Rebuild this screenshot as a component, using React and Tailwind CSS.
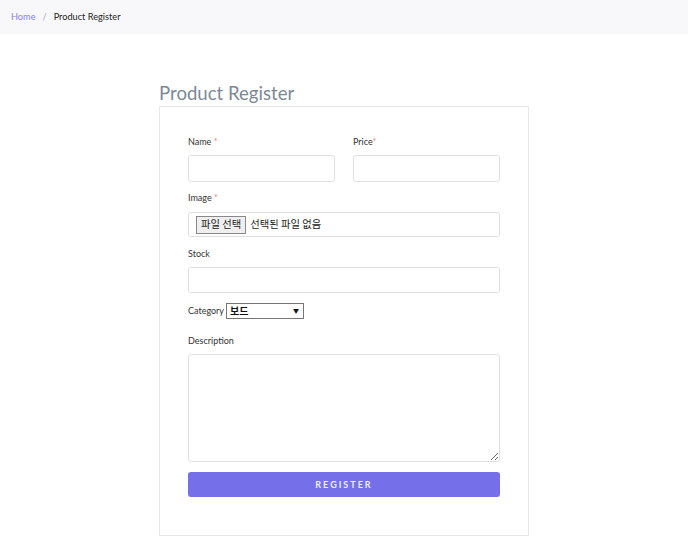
import React from "react";

export default function App() {
  return (
    <div className="min-h-[538px] w-full bg-white font-['Lato','Noto_Sans',sans-serif]">
      <div className="flex h-[34px] items-center bg-[#f8f8fa] px-[11px] text-[9.2px] text-[#333]">
        <span className="text-[#8a82f2]">Home</span>
        <span className="mx-[7px] text-[#aaa]">/</span>
        <span className="text-[#222]">Product Register</span>
      </div>

      <div className="mx-auto mt-[46px] w-[370px]">
        <h1 className="text-[18.6px] leading-[26px] font-normal text-[#7d8896]">Product Register</h1>
        <div className="flex flex-col border border-[#e6e8eb] px-[28px] pt-[28px] pb-[38px] text-[9px] text-[#333]">
          <div className="flex gap-[18px]">
            <div className="flex flex-1 flex-col">
              <label className="mb-[6px] leading-[14px]">
                Name <span className="text-[#f07a7a]">*</span>
              </label>
              <input className="h-[27px] rounded-[3px] border border-[#dde1e6] bg-white outline-none" />
            </div>
            <div className="flex flex-1 flex-col">
              <label className="mb-[6px] leading-[14px]">
                Price<span className="text-[#f07a7a]">*</span>
              </label>
              <input className="h-[27px] rounded-[3px] border border-[#dde1e6] bg-white outline-none" />
            </div>
          </div>

          <label className="mt-[9px] mb-[7px] leading-[14px]">
            Image <span className="text-[#f07a7a]">*</span>
          </label>
          <div className="flex h-[25px] items-center rounded-[3px] border border-[#dde1e6] pl-[7px] font-['Noto_Sans_CJK_KR',sans-serif] text-[10.3px] text-[#222]">
            <span className="flex h-[18px] items-center border border-[#888] bg-[#efefef] px-[4px] leading-none">파일 선택</span>
            <span className="ml-[4px] leading-none">선택된 파일 없음</span>
          </div>

          <label className="mt-[10px] mb-[6px] leading-[14px]">Stock</label>
          <input className="h-[26px] rounded-[3px] border border-[#dde1e6] bg-white outline-none" />

          <div className="mt-[10px] flex h-[16px] items-center">
            <span className="mr-[2px] leading-[14px]">Category</span>
            <div className="flex h-[16px] w-[78px] items-center justify-between border border-[#767676] bg-white pr-[4px] pl-[3px] font-['Noto_Sans_CJK_KR',sans-serif] text-[10px] font-bold text-[#111]">
              <span className="leading-none">보드</span>
              <span className="text-[6px] leading-none">▼</span>
            </div>
          </div>

          <label className="mt-[15px] mb-[6px] leading-[14px]">Description</label>
          <textarea className="h-[108px] rounded-[3px] border border-[#dde1e6] bg-white outline-none" />

          <button className="mt-[10px] h-[25px] rounded-[3px] bg-[#7570e9] text-[9px] font-bold tracking-[2px] text-[#eeedfd]">
            REGISTER
          </button>
        </div>
      </div>
    </div>
  );
}
